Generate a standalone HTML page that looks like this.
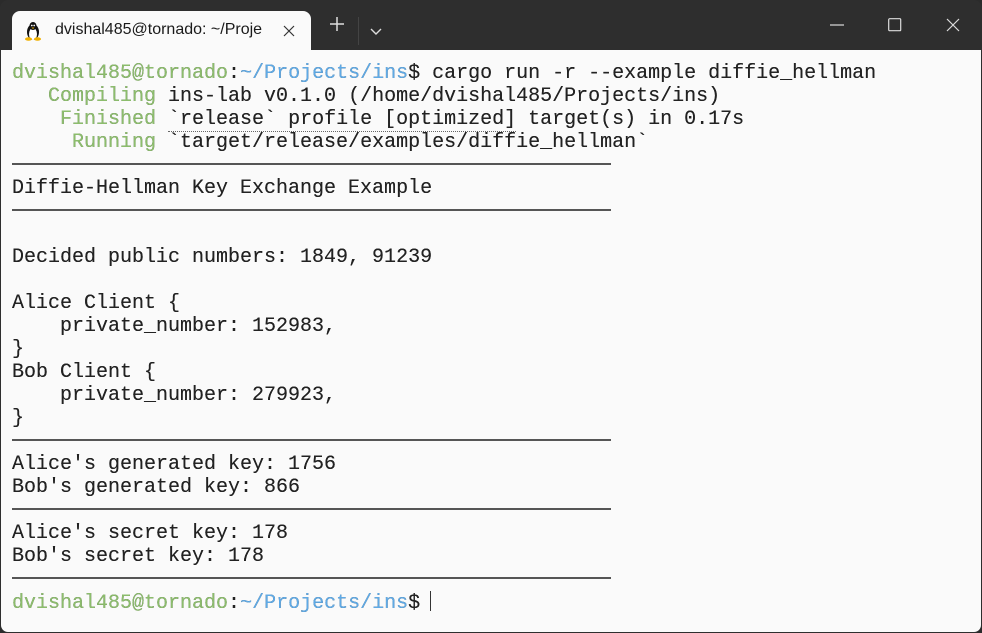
<!DOCTYPE html>
<html><head><style>
html,body{margin:0;padding:0;width:982px;height:633px;overflow:hidden;background:#2b2b2b}
.win{position:absolute;left:0;top:0;width:982px;height:633px;background:#2e2e2e;border-radius:8px;overflow:hidden}
.tab{position:absolute;left:12px;top:11px;width:299px;height:40px;background:#fafafa;border-radius:8px 8px 0 0}
.tab .t{position:absolute;left:43px;top:10px;font:16px "Liberation Sans",sans-serif;color:#1a1a1a}
.plus{position:absolute;left:329px;top:16px;width:16px;height:16px}
.sep{position:absolute;left:358px;top:17px;width:1px;height:28px;background:#444}
.term{position:absolute;left:1px;top:50px;width:980px;height:582px;background:#fafafa;border-radius:0 0 7px 7px}
.lines{position:absolute;left:11px;top:12px;font:20px/23px "Liberation Mono",monospace;color:#222;white-space:pre;text-shadow:0 0 0.3px #222}
.g{color:#8cbd6c}.b{color:#5faae6}
.rule{position:absolute;left:11px;width:599px;height:2px;background:#555}
.dot{border-bottom:1px dotted #666}
.cur{display:inline-block;width:1px;height:20px;background:#333;vertical-align:-3px;margin-left:10px}
</style></head><body>
<div class="win">
<div class="tab">
<svg style="position:absolute;left:12px;top:10px" width="18" height="20" viewBox="0 0 18 20"><ellipse cx="9" cy="11" rx="6" ry="8" fill="#111"/><ellipse cx="9" cy="13" rx="4" ry="6" fill="#fff"/><ellipse cx="9" cy="5" rx="3.5" ry="4" fill="#111"/><circle cx="7.8" cy="4.5" r=".9" fill="#fff"/><circle cx="10.2" cy="4.5" r=".9" fill="#fff"/><path d="M7.5 6.5h3l-1.5 1.5z" fill="#f0b000"/><ellipse cx="4.5" cy="18" rx="3.5" ry="1.8" fill="#f0b000"/><ellipse cx="13.5" cy="18" rx="3.5" ry="1.8" fill="#f0b000"/></svg>
<div class="t">dvishal485@tornado: ~/Proje</div>
<svg style="position:absolute;left:271px;top:14px" width="12" height="12"><path d="M1 1L11 11M11 1L1 11" stroke="#333" stroke-width="1.2"/></svg>
</div>
<svg class="plus"><path d="M8 1V15M1 8H15" stroke="#ddd" stroke-width="1.5"/></svg>
<div class="sep"></div>
<svg style="position:absolute;left:370px;top:28px" width="12" height="8"><path d="M1 1L6 6L11 1" stroke="#ddd" stroke-width="1.4" fill="none"/></svg>
<svg style="position:absolute;left:830px;top:24px" width="14" height="2"><path d="M0 1H14" stroke="#ddd" stroke-width="1.2"/></svg>
<svg style="position:absolute;left:888px;top:18px" width="14" height="14"><rect x=".7" y=".7" width="12" height="12" rx="1" stroke="#ddd" stroke-width="1.2" fill="none"/></svg>
<svg style="position:absolute;left:946px;top:18px" width="14" height="14"><path d="M1 1L13 13M13 1L1 13" stroke="#ddd" stroke-width="1.2"/></svg>
<div class="term">
<div class="lines"><span class="g">dvishal485@tornado</span>:<span class="b">~/Projects/ins</span>$ cargo run -r --example diffie_hellman
<span class="g">   Compiling</span> ins-lab v0.1.0 (/home/dvishal485/Projects/ins)
<span class="g">    Finished</span> <span class="dot">`release` profile [optimized]</span> target(s) in 0.17s
<span class="g">     Running</span> `target/release/examples/diffie_hellman`

Diffie-Hellman Key Exchange Example


Decided public numbers: 1849, 91239

Alice Client {
    private_number: 152983,
}
Bob Client {
    private_number: 279923,
}

Alice's generated key: 1756
Bob's generated key: 866

Alice's secret key: 178
Bob's secret key: 178

<span class="g">dvishal485@tornado</span>:<span class="b">~/Projects/ins</span>$<span class="cur"></span></div>
<div class="rule" style="top:113px"></div>
<div class="rule" style="top:159px"></div>
<div class="rule" style="top:389px"></div>
<div class="rule" style="top:458px"></div>
<div class="rule" style="top:527px"></div>
</div>
</div>
</body></html>
